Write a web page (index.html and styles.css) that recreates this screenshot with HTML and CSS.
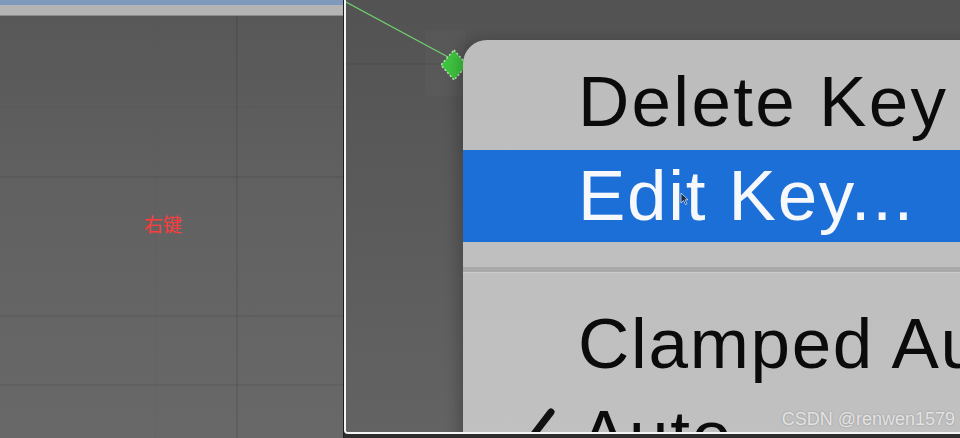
FILE: index.html
```html
<!DOCTYPE html>
<html lang="zh-CN">
<head>
<meta charset="utf-8">
<title>Edit Key</title>
<link rel="stylesheet" href="styles.css">
</head>
<body>
<div class="screen">
  <section class="graph-left">
    <div class="titlebar"><div class="titlebar-blue"></div><div class="titlebar-gray"></div></div>
    <span class="note">右键</span>
  </section>
  <section class="window">
    <div class="frame">
      <div class="curve-area">
        <svg class="curve" width="614" height="432" viewBox="0 0 614 432">
          <rect x="79" y="30" width="40" height="66" fill="rgba(255,255,255,0.02)"/>
          <line x1="0" y1="64" x2="95" y2="64" stroke="rgba(0,0,0,0.1)" stroke-width="1"/>
          <line x1="0" y1="2" x2="102" y2="57" stroke="#6fd06f" stroke-width="1.3"/>
          <polygon points="108,50 121,65 108,80 95,65" fill="#3fc43f" stroke="#b9e6b9" stroke-width="1.5" stroke-dasharray="2 2"/>
        </svg>
        <div class="context-menu">
          <div class="item first">Delete Key</div>
          <div class="item active">Edit Key...
            <svg class="pointer" width="9" height="13" viewBox="0 0 9 13"><path d="M1 1 L1 11 L3.5 8.5 L5.5 12.5 L7 11.8 L5 7.8 L8 7.8 Z" fill="#1a2a40" stroke="#cfe0f7" stroke-width="0.8"/></svg>
          </div>
          <div class="sep"></div>
          <div class="item">Clamped Auto</div>
          <div class="item checked"><svg class="check" width="30" height="48" viewBox="0 0 30 48"><path d="M26 4 L6 30" stroke="#111" stroke-width="7" stroke-linecap="round"/></svg><span>Auto</span></div>
        </div>
      </div>
    </div>
  </section>
  <div class="watermark">CSDN @renwen1579</div>
</div>
</body>
</html>
```
FILE: styles.css
```css
html, body {
  margin: 0;
  padding: 0;
}
body {
  width: 960px;
  height: 438px;
  overflow: hidden;
  background: #2c2c2c;
  font-family: "Liberation Sans", Arial, sans-serif;
}
.screen {
  position: relative;
  display: flex;
  width: 960px;
  height: 438px;
}
.graph-left {
  position: relative;
  width: 343px;
  flex: none;
  height: 438px;
  background-color: #5f5f5f;
  background-image:
    linear-gradient(to right, transparent 236px, rgba(0,0,0,0.08) 236px, rgba(0,0,0,0.08) 238px, transparent 238px),
    linear-gradient(to right, transparent 154px, rgba(0,0,0,0.015) 154px, rgba(0,0,0,0.015) 156px, transparent 156px),
    linear-gradient(to bottom, transparent 106px, rgba(0,0,0,0.025) 106px, rgba(0,0,0,0.025) 108px, transparent 108px),
    linear-gradient(to bottom, transparent 176px, rgba(0,0,0,0.07) 176px, rgba(0,0,0,0.07) 178px, transparent 178px),
    linear-gradient(to bottom, transparent 315px, rgba(0,0,0,0.06) 315px, rgba(0,0,0,0.06) 317px, transparent 317px),
    linear-gradient(to bottom, transparent 384px, rgba(0,0,0,0.06) 384px, rgba(0,0,0,0.06) 386px, transparent 386px),
    linear-gradient(to bottom, #575757 0%, #626262 50%, #686868 100%);
}
.titlebar {
  display: flex;
  flex-direction: column;
}
.titlebar-blue {
  height: 5px;
  background: #7f99bc;
}
.titlebar-gray {
  height: 10px;
  background: #b4b4b4;
  border-bottom: 1px solid #8c8c8c;
}
.note {
  position: absolute;
  left: 144px;
  top: 213px;
  color: #ff3b3b;
  font-family: "Noto Sans CJK SC", sans-serif;
  font-size: 19px;
  line-height: 22px;
}
.window {
  flex: 1;
  height: 438px;
  background: #2e2e2e;
  box-shadow: inset 1px 0 0 #1e1e1e;
  padding-left: 1px;
}
.frame {
  height: 432px;
  border-left: 2px solid #f4f4f4;
  border-bottom: 2px solid #f4f4f4;
  border-bottom-left-radius: 4px;
  overflow: hidden;
}
.curve-area {
  position: relative;
  height: 432px;
  overflow: hidden;
  background: linear-gradient(to bottom, #535353 0%, #5b5b5b 50%, #636363 100%);
}
.curve {
  position: absolute;
  left: 0;
  top: 0;
}
.context-menu {
  position: absolute;
  left: 117px;
  top: 40px;
  width: 560px;
  height: 460px;
  padding-top: 14px;
  background: linear-gradient(to bottom, #bdbdbd, #c1c1c1);
  border-top-left-radius: 24px;
  box-shadow: -6px 0 14px rgba(0,0,0,0.2);
  box-sizing: border-box;
}
.item {
  position: relative;
  display: flex;
  align-items: center;
  height: 92px;
  padding-left: 115px;
  font-size: 71px;
  line-height: 92px;
  letter-spacing: 1.7px;
  color: #0b0b0b;
  white-space: nowrap;
}
.item.first {
  height: 96px;
  line-height: 96px;
  letter-spacing: 2.3px;
}
.item.active {
  background: #1d6fd8;
  color: #f6f8fc;
}
.pointer {
  position: absolute;
  left: 217px;
  top: 42px;
}
.sep {
  height: 5px;
  margin: 25px 0 26px;
  background: #a9a9a9;
  box-shadow: 0 1px 1px rgba(255,255,255,0.2);
}
.item.checked {
  padding-left: 62px;
  gap: 25px;
}
.check {
  flex: none;
  align-self: flex-start;
  margin-top: 18px;
}
.watermark {
  position: absolute;
  right: 5px;
  bottom: 10px;
  font-family: "Liberation Sans", Arial, sans-serif;
  font-size: 18px;
  line-height: 18px;
  color: rgba(240,240,240,0.85);
  text-shadow: 0 0 2px rgba(0,0,0,0.25);
}
```
